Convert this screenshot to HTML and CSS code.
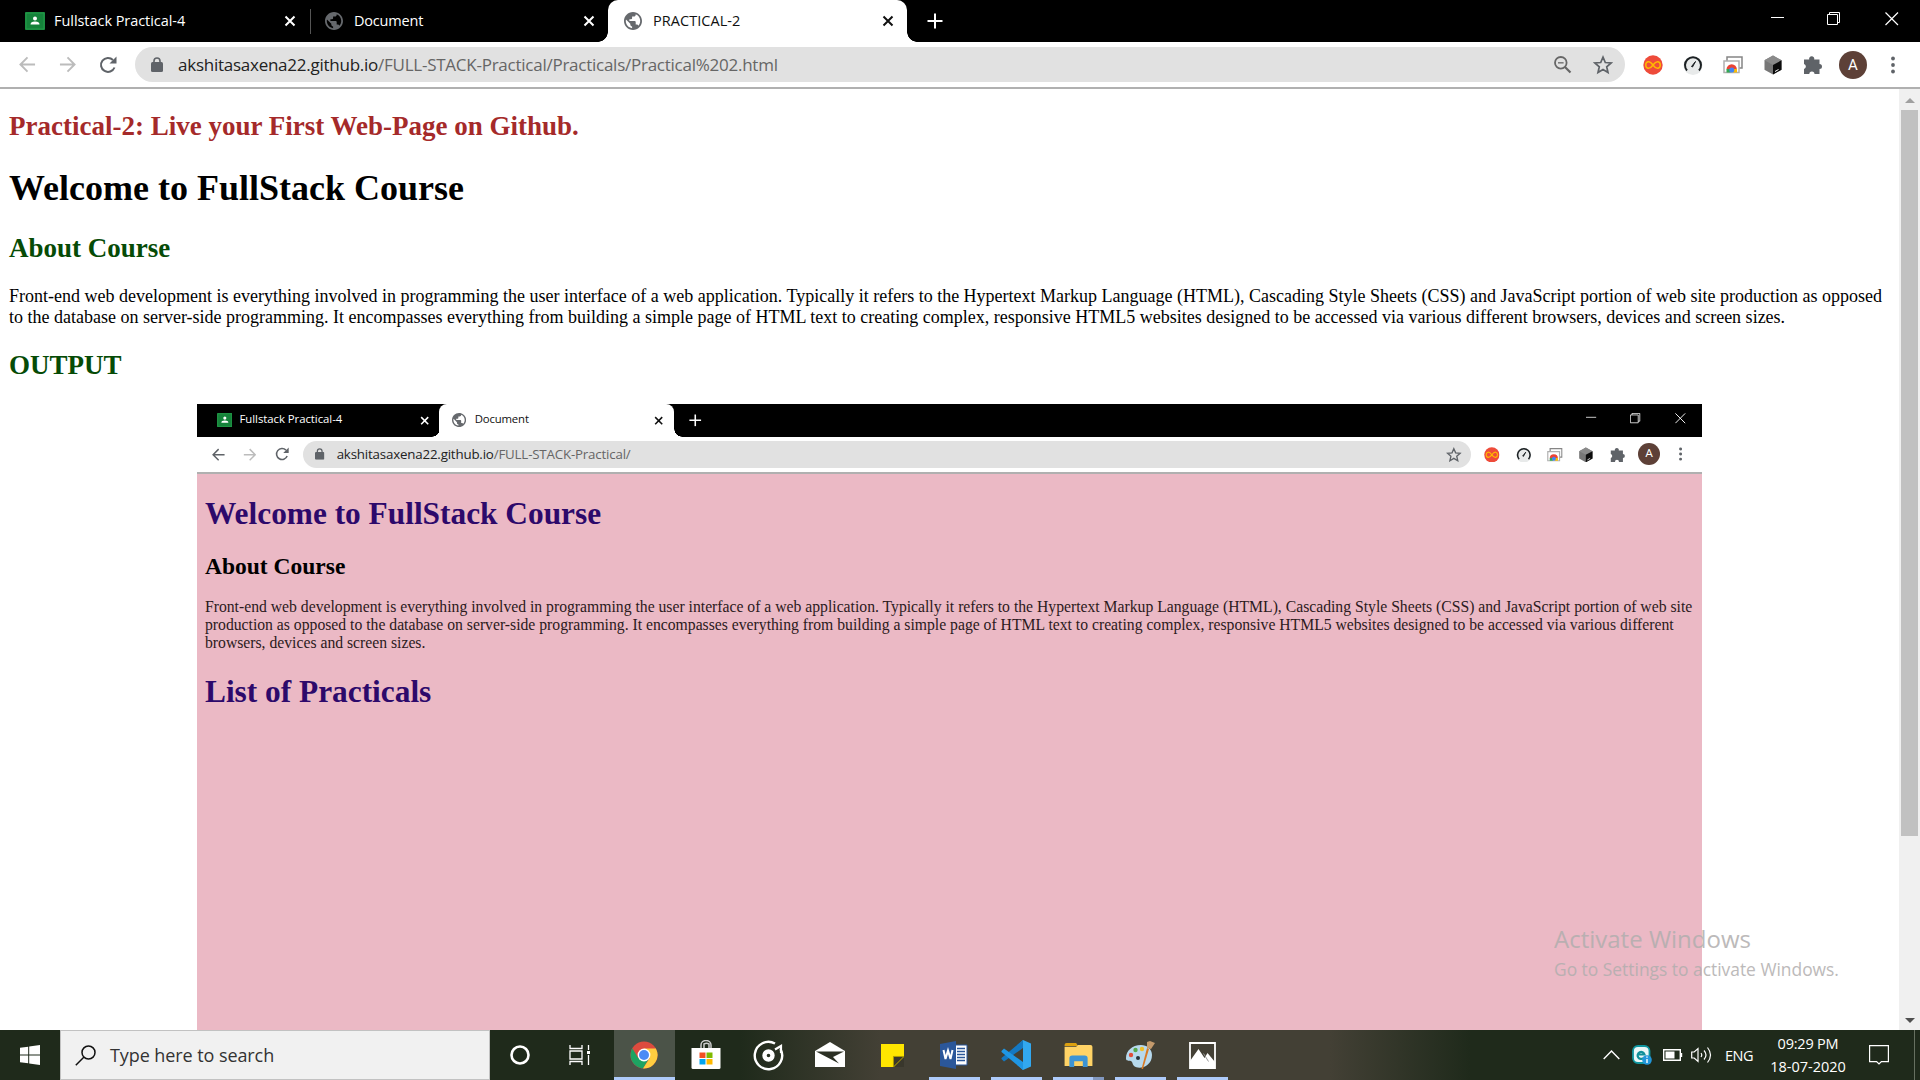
FILE: index.html
```html
<!DOCTYPE html>
<html lang="en">
<head>
<meta charset="utf-8">
<title>PRACTICAL-2</title>
<link rel="stylesheet" href="styles.css">
</head>
<body>
<svg class="defs" width="0" height="0">
  <symbol id="globe" viewBox="2 2 20 20"><path fill="#66696d" d="M12 2C6.480 2 2 6.480 2 12s4.480 10 10 10 10-4.480 10-10S17.520 2 12 2zm-1 17.930c-3.950-.490-7-3.850-7-7.930 0-.620.080-1.210.210-1.790L9 15v1c0 1.100.9 2 2 2v1.930zm6.900-2.540c-.260-.810-1-1.390-1.900-1.390h-1v-3c0-.550-.450-1-1-1H8v-2h2c.550 0 1-.450 1-1V7h2c1.100 0 2-.9 2-2v-.410c2.930 1.190 5 4.060 5 7.410 0 2.080-.8 3.970-2.100 5.390z"/></symbol>
  <symbol id="classroom" viewBox="0 0 20 18"><rect width="20" height="18" rx="1" fill="#15823a"/><rect x="1" y="1" width="18" height="16" fill="none" stroke="#249b48"/><circle cx="10" cy="6.500" r="2" fill="#fff"/><path d="M5.500 12.500q0-3 4.500-3t4.500 3z" fill="#fff"/></symbol>
  <symbol id="x" viewBox="0 0 12 12"><path d="M1.500 1.500l9 9m0-9l-9 9" fill="none" stroke="currentColor" stroke-width="2"/></symbol>
  <symbol id="plus" viewBox="0 0 16 16"><path d="M8 0.500v15M0.500 8h15" stroke="currentColor" stroke-width="2"/></symbol>
  <symbol id="min" viewBox="0 0 14 14"><path d="M0 5.500h13" stroke="#fff"/></symbol>
  <symbol id="max" viewBox="0 0 14 14"><path d="M.5 2.500h10v10H.5zM2.500 2.500V.5h10v10h-2" fill="none" stroke="#fff"/></symbol>
  <symbol id="close" viewBox="0 0 14 14"><path d="M.5.5l12.500 12.500M13 .5L.5 13" stroke="#fff" stroke-width="1.200"/></symbol>
  <symbol id="arrow" viewBox="0 0 18 18"><path d="M17 9H2M9 1.500L1.500 9 9 16.500" fill="none" stroke="currentColor" stroke-width="2"/></symbol>
  <symbol id="reload" viewBox="0 0 18 18"><path d="M15.500 11.500A7 7 0 1 1 14 4" fill="none" stroke="#5f6368" stroke-width="2"/><path d="M17.500.5v7h-7z" fill="#5f6368"/></symbol>
  <symbol id="lock" viewBox="0 0 12 15"><rect y="5" width="12" height="10" rx="1.500" fill="#5f6368"/><path d="M3 6V4a3 3 0 0 1 6 0v2" fill="none" stroke="#5f6368" stroke-width="1.600"/></symbol>
  <symbol id="zoomout" viewBox="0 0 18 18"><circle cx="6.800" cy="6.800" r="5.800" fill="none" stroke="#666" stroke-width="1.800"/><path d="M11 11l5.500 5.500" stroke="#666" stroke-width="2.200"/><path d="M4 6.800h5.600" stroke="#777" stroke-width="1.500"/></symbol>
  <symbol id="star" viewBox="0 0 20 20"><path d="M10 2.200l2.300 5.300 5.800.5-4.400 3.800 1.300 5.700-5-3-5 3 1.300-5.700L1.900 8l5.800-.5z" fill="none" stroke="#5f6368" stroke-width="1.700"/></symbol>
  <symbol id="loop" viewBox="0 0 20 20"><circle cx="10" cy="10" r="9.700" fill="#ee4b3a"/><path d="M10 10C7.500 6.500 6 6.500 5 6.700c-3 .7-3 5.900 0 6.600 1 .2 2.500.2 5-3.300s4-3.500 5-3.300c3 .7 3 5.900 0 6.600-1 .2-2.500.2-5-3.300z" fill="none" stroke="#ffb900" stroke-width="1.500"/></symbol>
  <symbol id="gauge" viewBox="0 0 20 20"><circle cx="10" cy="10.500" r="9.500" fill="#e8eaea"/><path d="M4 15.500A8 8 0 1 1 16 15.500" fill="none" stroke="#1b2023" stroke-width="2"/><path d="M8.500 11.500l4-5-3 5.500z" fill="#1b2023" stroke="#1b2023"/></symbol>
  <symbol id="cast" viewBox="0 0 20 20"><path d="M4 6V2h15v11h-3" fill="none" stroke="#858585" stroke-width="1.500"/><path d="M1 6h15v11.500H1z" fill="#fff" stroke="#b0b0b0" stroke-width="1.500"/><path d="M3.500 14.500a5.200 5.200 0 0 1 10.400 0z" fill="#ea4335"/><path d="M3.500 14h4v3.500h-4z" fill="#34a853"/><path d="M10 14h4v3.500h-4z" fill="#fbbc04"/><circle cx="8.800" cy="15" r="2.500" fill="#4285f4"/></symbol>
  <symbol id="cube" viewBox="0 0 18 20"><path d="M9 .5l8.500 4.800v9.400L9 19.500.5 14.700V5.300z" fill="#777"/><path d="M9 .5l8.500 4.800L9 10 .5 5.300z" fill="#8a8a8a"/><path d="M9 10l8.500-4.700v9.400L9 19.500z" fill="#0c0c0c"/><path d="M11 16.500l3.500-2" stroke="#fff"/></symbol>
  <symbol id="puzzle" viewBox="0 0 20 20"><path d="M1 4.500h5.200a2.600 2.600 0 1 1 5 0h5.300V9a2.500 2.500 0 1 1 0 5v5h-5a2.600 2.600 0 0 0-5.200 0H1v-5a2.600 2.600 0 0 0 0-5z" fill="#5f6368"/></symbol>
  <symbol id="dots" viewBox="0 0 4 18"><circle cx="2" cy="2.500" r="1.900" fill="#5f6368"/><circle cx="2" cy="9" r="1.900" fill="#5f6368"/><circle cx="2" cy="15.500" r="1.900" fill="#5f6368"/></symbol>
</svg>

<div class="desktop">
  <div class="browser main">
    <header class="tabs">
      <div class="tab first"><svg class="fav cls"><use href="#classroom"/></svg><span class="t1">Fullstack Practical-4</span><svg class="x"><use href="#x"/></svg></div>
      <div class="tab dark"><svg class="fav"><use href="#globe"/></svg><span class="t2">Document</span><svg class="x"><use href="#x"/></svg></div>
      <div class="tab active"><svg class="fav"><use href="#globe"/></svg><span class="t3">PRACTICAL-2</span><svg class="x"><use href="#x"/></svg></div>
      <svg class="plus"><use href="#plus"/></svg>
      <div class="win"><svg><use href="#min"/></svg><svg><use href="#max"/></svg><svg><use href="#close"/></svg></div>
    </header>
    <nav class="toolbar">
      <svg class="nav off"><use href="#arrow"/></svg><svg class="nav off fwd"><use href="#arrow"/></svg><svg class="nav rel"><use href="#reload"/></svg>
      <div class="omni"><svg class="lock"><use href="#lock"/></svg><span class="url u1">akshitasaxena22.github.io<i>/FULL-STACK-Practical/Practicals/Practical%202.html</i></span><svg class="mag"><use href="#zoomout"/></svg><svg class="star"><use href="#star"/></svg></div>
      <div class="ext"><svg><use href="#loop"/></svg><svg><use href="#gauge"/></svg><svg><use href="#cast"/></svg><svg><use href="#cube"/></svg><svg><use href="#puzzle"/></svg></div>
      <span class="avatar">A</span><svg class="dots"><use href="#dots"/></svg>
    </nav>
    <div class="view">
      <main class="page">
        <h2 class="brown">Practical-2: Live your First Web-Page on Github.</h2>
        <h1>Welcome to FullStack Course</h1>
        <h2 class="green">About Course</h2>
        <p>Front-end web development is everything involved in programming the user interface of a web application. Typically it refers to the Hypertext Markup Language (HTML), Cascading Style Sheets (CSS) and JavaScript portion of web site production as opposed<br>to the database on server-side programming. It encompasses everything from building a simple page of HTML text to creating complex, responsive HTML5 websites designed to be accessed via various different browsers, devices and screen sizes.</p>
        <h2 class="green">OUTPUT</h2>
        <div class="shot">
          <div class="browser">
            <header class="tabs">
              <div class="tab first"><svg class="fav cls"><use href="#classroom"/></svg><span class="t1">Fullstack Practical-4</span><svg class="x"><use href="#x"/></svg></div>
              <div class="tab active"><svg class="fav"><use href="#globe"/></svg><span class="t2">Document</span><svg class="x"><use href="#x"/></svg></div>
              <svg class="plus"><use href="#plus"/></svg>
              <div class="win"><svg><use href="#min"/></svg><svg><use href="#max"/></svg><svg><use href="#close"/></svg></div>
            </header>
            <nav class="toolbar">
              <svg class="nav"><use href="#arrow"/></svg><svg class="nav off fwd"><use href="#arrow"/></svg><svg class="nav rel"><use href="#reload"/></svg>
              <div class="omni"><svg class="lock"><use href="#lock"/></svg><span class="url u2">akshitasaxena22.github.io<i>/FULL-STACK-Practical/</i></span><svg class="star"><use href="#star"/></svg></div>
              <div class="ext"><svg><use href="#loop"/></svg><svg><use href="#gauge"/></svg><svg><use href="#cast"/></svg><svg><use href="#cube"/></svg><svg><use href="#puzzle"/></svg></div>
              <span class="avatar">A</span><svg class="dots"><use href="#dots"/></svg>
            </nav>
            <section class="pink">
              <h1>Welcome to FullStack Course</h1>
              <h2>About Course</h2>
              <p>Front-end web development is everything involved in programming the user interface of a web application. Typically it refers to the Hypertext Markup Language (HTML), Cascading Style Sheets (CSS) and JavaScript portion of web site<br>production as opposed to the database on server-side programming. It encompasses everything from building a simple page of HTML text to creating complex, responsive HTML5 websites designed to be accessed via various different<br>browsers, devices and screen sizes.</p>
              <h1>List of Practicals</h1>
            </section>
          </div>
        </div>
      </main>
      <div class="scroll"><i class="up"></i><i class="thumb"></i><i class="down"></i></div>
    </div>
  </div>

  <footer class="taskbar">
    <div class="start"><svg width="20" height="20" viewBox="0 0 20 20" fill="#fff"><path d="M0 2.800L8.200 1.700V9.500H0zM9.200 1.500L20 0v9.500H9.200zM0 10.500h8.200v7.800L0 17.200zM9.200 10.500H20V20L9.200 18.500z"/></svg></div>
    <div class="search"><svg width="21" height="21" viewBox="0 0 21 21" fill="none" stroke="#111" stroke-width="1.500"><circle cx="13.500" cy="7.500" r="6.500"/><path d="M9 12L.8 20.200"/></svg><span>Type here to search</span></div>
    <div class="app sys"><svg width="20" height="20" viewBox="0 0 20 20"><circle cx="10" cy="10" r="8.500" fill="none" stroke="#fff" stroke-width="2.600"/></svg></div>
    <div class="app sys view-btn"><svg width="22" height="20" viewBox="0 0 22 20" fill="none" stroke="#fff" stroke-width="1.300"><path d="M1 0v3.500h12V0M1 6h12v8H1zM1 20v-3.500h12V20M19.500 0v5M19.500 10v10"/><path d="M18 6h3v3h-3z" fill="#fff" stroke="none"/></svg></div>
    <div class="app on"><svg width="28" height="28" viewBox="0 0 28 28"><circle cx="14" cy="14" r="13.500" fill="#dd4b3e"/><path d="M2.300 7.300A13.500 13.500 0 0 0 13 27.500l6-10-5-3.500-5.800 3z" fill="#1ea362"/><path d="M14 7.500h11.800A13.500 13.500 0 0 1 13 27.500l6.500-10z" fill="#ffcd40"/><circle cx="14" cy="14" r="6.400" fill="#fff"/><circle cx="14" cy="14" r="5" fill="#4c8bf5"/></svg></div>
    <div class="app"><svg width="30" height="30" viewBox="0 0 30 30"><path d="M10 9V5a5 4.500 0 0 1 10 0v4M13 8V4a4 3 0 0 1 5 0v4" fill="none" stroke="#ccc" stroke-width="1.500"/><path d="M.5 8h29v19.500q0 1.500-1.500 1.500H2q-1.500 0-1.500-1.500z" fill="#fff"/><path d="M8.500 12.500h6V18h-6z" fill="#f25022"/><path d="M15.500 12.500h6V18h-6z" fill="#7fba00"/><path d="M8.500 19h6v5.500h-6z" fill="#00a4ef"/><path d="M15.500 19h6v5.500h-6z" fill="#ffb900"/></svg></div>
    <div class="app"><svg width="31" height="31" viewBox="0 0 31 31"><path d="M22 3.500A13.700 13.700 0 1 0 27.500 9" fill="none" stroke="#fff" stroke-width="2.400"/><path d="M22 9.500l6-3.500v7" fill="none" stroke="#fff" stroke-width="2.200"/><circle cx="15.500" cy="15.500" r="4" fill="none" stroke="#fff" stroke-width="4.400"/></svg></div>
    <div class="app"><svg class="mail" width="30" height="26" viewBox="0 0 30 26"><path d="M0 9L15 0l15 9v16H0z" fill="#fff"/><path d="M1 9.500h28L18 15l6 6.500z" fill="#2c3024"/></svg></div>
    <div class="app"><svg width="23" height="23" viewBox="0 0 24 24"><path d="M0 0h24v24H0z" fill="#ffe600"/><path d="M24 13L13 24h11z" fill="#39372c"/><path d="M13 24V13h11z" fill="#39372c" stroke="#ad9c00"/></svg></div>
    <div class="app open"><svg width="28" height="28" viewBox="0 0 28 28"><path d="M14 4h13v20H14z" fill="#fff" stroke="#2b579a"/><path d="M17 7.500h8m-8 3h8m-8 3h8m-8 3h8m-8 3h8" stroke="#2b579a" stroke-width="1.500"/><path d="M0 3L16 0v28L0 25z" fill="#2b579a"/><path d="M3.500 9l2 9 2.500-8.500L10.500 18l2-9" fill="none" stroke="#fff" stroke-width="2"/></svg></div>
    <div class="app open"><svg width="30" height="30" viewBox="0 0 30 30"><path d="M22 0l8 3.500v23L22 30 17 25 22 22V8l-5-3z" fill="#32a8f0"/><path d="M22 0v8L3 21.500.5 19v-1z" fill="#1478c2"/><path d="M22 30v-8L3 8.500.5 11v1z" fill="#1f96e4"/></svg></div>
    <div class="app open many"><svg width="29" height="24" viewBox="0 0 29 25"><path d="M0 2q0-2 2-2h10l2 3H0z" fill="#dca010"/><path d="M0 4h12l2-2h13q2 0 2 2v20H0z" fill="#ffd366"/><path d="M5 25v-9q0-3 3-3h13q3 0 3 3v9h-5v-6H10v6z" fill="#3d94d4"/></svg></div>
    <div class="app open"><svg width="30" height="30" viewBox="0 0 30 30"><path d="M16 5C7 5 1 11 1 18c0 4 3 2 5 3s1 3 3 5c5 4 18 1 18-11C27 9 22 5 16 5z" fill="#b7d9ed"/><circle cx="6" cy="15" r="2.200" fill="#e04c39"/><circle cx="10.500" cy="10" r="2.200" fill="#57a94d"/><circle cx="17" cy="9" r="2.200" fill="#efc02c"/><circle cx="13" cy="18" r="2" fill="#27343d"/><path d="M16.500 29l5.500-21 2 1-6 20z" fill="#d97a25"/><path d="M22 8V2l3-1 5 2-4 6z" fill="#c49a6c"/></svg></div>
    <div class="app open"><svg width="27" height="27" viewBox="0 0 27 27"><path d="M1 1h25v25H1z" fill="none" stroke="#fff" stroke-width="1.800"/><path d="M1 19L9.500 7l6 9 3-5 7.500 9v6H1z" fill="#fff"/><path d="M14.500 11.500l5 8" fill="none" stroke="#999"/></svg></div>
    <div class="tray">
      <svg width="17" height="10" viewBox="0 0 17 10" fill="none" stroke="#fff" stroke-width="1.400"><path d="M.7 9l7.800-8 7.800 8"/></svg>
      <svg class="eset" width="20" height="20" viewBox="0 0 20 20"><rect x="1" y="1" width="16.500" height="17" rx="5" fill="#eaf7f8" stroke="#0f96a0" stroke-width="1.800"/><path d="M5.500 9.500h7a3.500 3.500 0 1 0-1 3.500" fill="none" stroke="#0f8f99" stroke-width="2.200"/><circle cx="15" cy="15" r="4.800" fill="#2196db"/><path d="M15 14v4M15 11.500v1.300" stroke="#fff" stroke-width="1.400"/></svg>
      <svg class="batt" width="20" height="12" viewBox="0 0 20 12"><path d="M.7.700h16.600v10.600H.7zM18.500 4v4" fill="none" stroke="#fff" stroke-width="1.400"/><path d="M2.500 2.500h9v7h-9z" fill="#fff"/></svg>
      <svg class="vol" width="22" height="18" viewBox="0 0 22 18" fill="none" stroke="#fff" stroke-width="1.200"><path d="M.7 6h2.500L7 2.500v13L3.200 12H.7zM10 7q1.500 2 0 4M13 4.500q4 4.500 0 9M16.500 1.500q6 7.500 0 15"/></svg>
      <span class="lang">ENG</span>
      <div class="clock"><span class="time">09:29 PM</span><span class="date">18-07-2020</span></div>
      <svg class="note" width="20" height="20" viewBox="0 0 20 20" fill="none" stroke="#fff" stroke-width="1.200"><path d="M.6.600h18.800v16h-7L10 19l-2.400-2.400h-7z"/></svg>
      <i class="peek"></i>
    </div>
  </footer>
  <div class="watermark"><div class="wa">Activate Windows</div><div class="wb">Go to Settings to activate Windows.</div></div>
</div>
</body>
</html>
```
FILE: styles.css
```css
* { box-sizing: border-box; }
body { margin: 0; overflow: hidden; background: #fff; }
svg { display: block; flex: none; }
.defs { position: absolute; }
.desktop { width: 1920px; height: 1080px; display: flex; flex-direction: column; overflow: hidden; }
.browser { width: 1920px; display: flex; flex-direction: column; font-family: "Open Sans", "Noto Sans", sans-serif; }
.main { height: 1030px; }

.tabs { height: 42px; flex: none; background: #000; display: flex; align-items: center; }
.tab { height: 42px; width: 299px; flex: none; display: flex; align-items: center; color: #fff; font-size: 14.500px; padding: 0 13px 0 16px; white-space: nowrap; }
.tab.first { width: 309px; padding-left: 25px; }
.tab.dark { position: relative; }
.tab.dark::before { content: ""; position: absolute; left: 1px; top: 9px; width: 1px; height: 25px; background: #555; }
.tab.active { background: #fff; color: #111; border-radius: 10px 10px 0 0; position: relative; }
.tab.active::before, .tab.active::after { content: ""; position: absolute; bottom: 0; width: 10px; height: 10px; }
.tab.active::before { left: -10px; background: radial-gradient(circle at 0 0, #000 9.500px, #fff 10px); }
.tab.active::after { right: -10px; background: radial-gradient(circle at 100% 0, #000 9.500px, #fff 10px); }
.tab span { margin-left: 11px; margin-top: -2px; }
.fav { width: 18px; height: 18px; }
.cls { width: 20px; height: 18px; }
.tab.first span { margin-left: 9px; }
.x { width: 12px; height: 12px; margin-left: auto; }
.plus { width: 16px; height: 16px; color: #fff; margin-left: 20px; }
.win { margin-left: auto; display: flex; gap: 42px; padding-right: 21px; margin-top: -5px; }
.win svg { width: 14px; height: 14px; }
.win svg:last-child { margin-left: 2px; }
.t1 { letter-spacing: -.05px; }
.t2 { letter-spacing: -.2px; }
.t3 { letter-spacing: .05px; }

.toolbar { height: 47px; flex: none; background: #fff; border-bottom: 2px solid #b0b0b0; display: flex; align-items: center; padding-left: 19px; }
.nav { width: 17px; height: 17px; color: #5f6368; margin-right: 23px; }
.off { color: #bcbcbc; }
.fwd { transform: scaleX(-1); }
.rel { width: 18px; height: 18px; margin: 0 18px 0 0; }
.omni { width: 1490px; height: 35px; border-radius: 18px; background: #e1e1e1; display: flex; align-items: center; padding: 0 12px 0 16px; }
.lock { width: 12px; height: 15px; }
.url { color: #222; font-size: 17px; margin-left: 15px; margin-right: auto; margin-top: -1px; white-space: nowrap; letter-spacing: -.25px; }
.u2 { letter-spacing: -.23px; }
.url i { font-style: normal; color: #666; }
.mag { width: 18px; height: 18px; margin-right: 21px; }
.star { width: 20px; height: 20px; }
.ext { display: flex; gap: 20px; margin-left: 18px; }
.ext svg { width: 20px; height: 20px; }
.avatar { width: 28px; height: 28px; border-radius: 50%; background: #5d4037; color: #fff; font: 15px/28px Roboto, sans-serif; text-align: center; margin-left: 16px; }
.dots { width: 4px; height: 18px; margin-left: 24px; }

.view { height: 941px; display: flex; overflow: hidden; }
.page { width: 1899px; padding: 0 9px; font-family: "Liberation Serif", serif; font-size: 18px; line-height: 21px; color: #000; overflow: hidden; white-space: nowrap; }
.page h1, .page h2, .page p { margin: 0; }
.page > h2 { font-size: 27px; line-height: 31px; margin: 22px 0; }
.page > h1 { font-size: 36px; line-height: 41px; margin: 26px 0 24px; }
.brown { color: #a52a2a; }
.green { color: #064b06; }
.shot { margin: 29.340px 0 0 240px; zoom: .784; }
.shot .toolbar { border-bottom-width: 2.600px; }
.shot .ext { margin-left: 17px; }
.page .pink { height: 760px; background: #ebb9c5; padding: 28px 10px; font-family: "Liberation Serif", serif; font-size: 20.030px; line-height: 23px; color: #2b1a20; }
.page .pink h1 { font-size: 40px; line-height: 46px; color: #2d096b; }
.page .pink h2 { font-size: 30px; line-height: 34px; color: #000; margin: 27px 0 24px; }
.page .pink p + h1 { margin-top: 28px; }

.scroll { width: 21px; background: #f0f0f0; display: flex; flex-direction: column; align-items: center; }
.scroll i { display: block; flex: none; }
.up { border: 5px solid transparent; border-top: 0; border-bottom-color: #a0a0a0; margin: 9px 0 7px; }
.thumb { width: 17px; height: 726px; background: #c1c1c1; }
.down { border: 5px solid transparent; border-bottom: 0; border-top-color: #505050; margin-top: auto; margin-bottom: 7px; }

.taskbar { height: 50px; display: flex; color: #fff; font-family: "Open Sans", "Noto Sans", sans-serif; background: linear-gradient(90deg, #1f2a1b 740px, #434035 880px, #434035 1330px, #1f2a1b 1470px); }
.start { width: 60px; display: flex; align-items: center; justify-content: center; }
.search { width: 430px; border: 1px solid #c2c2c2; background: #f1f1f1; display: flex; align-items: center; padding-left: 14px; gap: 14px; color: #333; font-size: 18px; letter-spacing: -.08px; }
.app { width: 62px; flex: none; display: flex; align-items: center; justify-content: center; position: relative; }
.sys { width: 60px; }
.view-btn { margin-right: 4px; }
.app.on { background: #4b5348; width: 61px; padding-right: 1px; }
.on::after, .open::after { content: ""; position: absolute; bottom: 0; left: 0; right: 0; height: 3px; background: #aecbfa; }
.open::after { left: 6px; right: 5px; }
.many::after { background: linear-gradient(90deg, #aecbfa 40px, #8298bf 40px); }
.tray { margin-left: auto; display: flex; align-items: center; position: relative; padding-right: 5px; }
.eset { margin-left: 12px; }
.batt { margin-left: 11px; }
.vol { margin-left: 8px; }
.lang { margin-left: 12px; width: 31px; font-size: 14.500px; letter-spacing: -.5px; }
.clock { width: 76px; margin-left: 14px; display: flex; flex-direction: column; align-items: center; font-size: 14.500px; line-height: 23px; white-space: nowrap; }
.time { letter-spacing: -.2px; }
.note { margin-left: 23px; }
.peek { width: 1px; height: 50px; background: #667060; margin-left: 25px; }
.watermark { position: absolute; left: 1554px; top: 921px; color: #b1aeae; opacity: .85; font-family: "Open Sans", "Noto Sans", sans-serif; white-space: nowrap; }
.wa { font-size: 24px; line-height: 36px; }
.wb { font-size: 17.400px; line-height: 24px; }
```
